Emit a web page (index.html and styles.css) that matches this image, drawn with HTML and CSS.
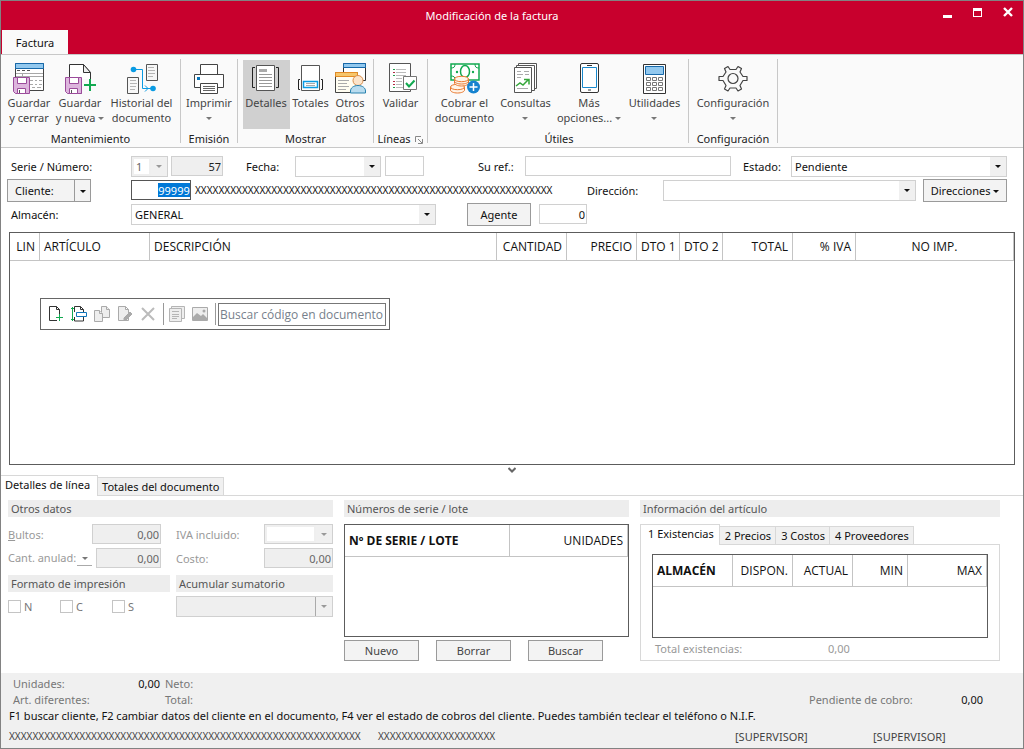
FILE: index.html
```html
<!DOCTYPE html>
<html lang="es">
<head>
<meta charset="utf-8">
<title>Modificación de la factura</title>
<link rel="stylesheet" href="styles.css">
</head>
<body>
<div class="window">
<header class="titlebar">
  <nav class="main-tabs"><button class="main-tab" type="button">Factura</button></nav>
  <h1 class="title">Modificación de la factura</h1>
  <div class="controls">
    <button type="button" aria-label="Minimizar"><svg width="10" height="12"><path d="M0 10h9v3H0z" fill="#fff"/></svg></button>
    <button type="button" aria-label="Maximizar"><svg width="10" height="12"><path d="M0 3h9v9H0zM1 6v5h7V6z" fill="#fff" fill-rule="evenodd"/></svg></button>
    <button type="button" aria-label="Cerrar"><svg width="10" height="12"><path d="M1 3l8 8M9 3l-8 8" stroke="#fff" stroke-width="2.4"/></svg></button>
  </div>
</header>

<div class="ribbon">
  <section class="group g-mant">
    <div class="tools">
      <button class="tool w51" type="button">
        <svg width="32" height="32" viewBox="0 0 32 32" fill="none"><path d="M2.5 1.5h28v27h-28z" fill="#fff" stroke="#444"/><path d="M2.500 1.500h28v5h-28z" fill="#92c8ee" stroke="#1769aa"/><path d="M4 8.500h3M9 8.500h3M14 8.500h3" stroke="#555"/><path d="M3 11.500h27M3 14.500h27M9.500 11v4M17 18.500h3M22 18.500h2M26 18.500h3M17 22.500h3M22 22.500h2M26 22.500h3M19 25.500h3M24 25.500h4" stroke="#a8a8a8"/><path d="M.5 15.500h16v16h-14l-2-2z" fill="#ddb5dd" stroke="#9b4b9b"/><path d="M4.500 15.500h9v6h-9zM4.500 26.500h8v5h-8z" fill="#fff" stroke="#9b4b9b"/><path d="M6.500 28v3" stroke="#555"/></svg>
        <span>Guardar<br>y cerrar</span></button>
      <button class="tool w51" type="button">
        <svg width="32" height="32" viewBox="0 0 32 32" fill="none"><path d="M5.500 31V2.500h14l7 8V31z" fill="#fff" stroke="#333"/><path d="M19.500 2.500v8h7z" fill="#eee" stroke="#333"/><path d="M18 17h13v15H18z" fill="#fafafa"/><path d="M1.500 15.500h16v16h-14l-2-2z" fill="#ddb5dd" stroke="#9b4b9b"/><path d="M5.500 15.500h9v6h-9zM5.500 26.500h8v5h-8z" fill="#fff" stroke="#9b4b9b"/><path d="M7.500 28v3" stroke="#555"/><path d="M26 17v12M20 23h12" stroke="#12a950" stroke-width="2"/></svg>
        <span>Guardar<br>y nueva <i class="caret"></i></span></button>
      <button class="tool w72" type="button">
        <svg width="32" height="32" viewBox="0 0 32 32" fill="none"><path d="M20.500 2.500h11v16h-11zM1.500 15.500h11v16h-11z" fill="#f7f7f7" stroke="#555"/><path d="M22 5.500h6M22 8.500h7M22 11.500h7M22 14.500h5M4 18.500h6M4 21.500h7M4 24.500h6M4 27.500h5" stroke="#b5b5b5"/><path d="M8 7.500h8.500v19H26" stroke="#0a9be3"/><path d="M19 23.500l3 3-3 3" stroke="#0a9be3"/><circle cx="7.500" cy="7.500" r="2.800" fill="#0a9be3"/><circle cx="27" cy="26.500" r="2.800" fill="#0a9be3"/></svg>
        <span>Historial del<br>documento</span></button>
    </div>
    <h2>Mantenimiento</h2>
  </section>
  <section class="group g-emi">
    <div class="tools">
      <button class="tool w51" type="button">
        <svg width="32" height="32" viewBox="0 0 32 32" fill="none"><path d="M7.500 2.500h17v10h-17z" fill="#fff" stroke="#444"/><path d="M1.500 12.500h29v13h-29z" fill="#fff" stroke="#444"/><path d="M4 15h3v3H4z" fill="#0876bb"/><path d="M7.500 21.500h17v10h-17z" fill="#fff" stroke="#444"/><path d="M10 24.500h12M10 26.500h12M10 28.500h12" stroke="#666"/></svg>
        <span>Imprimir<br><i class="caret"></i></span></button>
    </div>
    <h2>Emisión</h2>
  </section>
  <section class="group g-mos">
    <div class="tools">
      <button class="tool w47 active" type="button">
        <svg width="32" height="32" viewBox="0 0 32 32" fill="none"><path d="M6.500 3.500h18v25h-18z" fill="#fff" stroke="#555"/><path d="M9 7h8v3H9z" fill="#aaa"/><path d="M9 12.500h13M9 15.500h13M9 18.500h13M9 21.500h13M9 24.500h13" stroke="#999"/><path d="M5 5.500H2.500v20H5M26 5.500h2.500v20H26" stroke="#222"/></svg>
        <span>Detalles</span></button>
      <button class="tool w42" type="button">
        <svg width="32" height="32" viewBox="0 0 32 32" fill="none"><path d="M6.500 3.500h18v25h-18z" fill="#fff" stroke="#555"/><path d="M8.500 19.500h14v6h-14z" fill="#fff" stroke="#0a9be3" stroke-width="1.500"/><path d="M11 21.500h9M11 23.500h9" stroke="#aaa"/><path d="M5 17.500H3.500v10H5M26 17.500h1.500v10H26" stroke="#222"/></svg>
        <span>Totales</span></button>
      <button class="tool w37" type="button">
        <svg width="32" height="32" viewBox="0 0 32 32" fill="none"><path d="M9.500 1.500h22v17h-22z" fill="#fff" stroke="#333"/><path d="M9.500 1.500h22v4h-22z" fill="#92c8ee" stroke="#1769aa"/><path d="M1.500 10.500h22v20h-22z" fill="#fffdf1" stroke="#444"/><path d="M1.500 10.500h22v4h-22z" fill="#f6c66b" stroke="#e48b24"/><path d="M4 18.500h11M4 21.500h9M4 24.500h11M4 27.500h8" stroke="#aaa"/><circle cx="24" cy="18.500" r="5" fill="#fce4ca" stroke="#d98e4c"/><path d="M16.500 31v-2c0-3 3-5.500 7.500-5.500s7.500 2.500 7.500 5.500v2z" fill="#b9dcef" stroke="#2982ae"/></svg>
        <span>Otros<br>datos</span></button>
    </div>
    <h2>Mostrar</h2>
  </section>
  <section class="group g-lin">
    <div class="tools">
      <button class="tool w51" type="button">
        <svg width="32" height="32" viewBox="0 0 32 32" fill="none"><path d="M4.500 1.500h21v28h-21z" fill="#fff" stroke="#555"/><path d="M11 7.500h10M11 10.500h10M11 13.500h10M11 16.500h6M11 19.500h6M11 22.500h6M11 25.500h8" stroke="#bbb"/><path d="M8 7.500h2M8 13.500h2M8 25.500h2" stroke="#20a050"/><path d="M8 10.500h2M8 19.500h2M8 22.500h2" stroke="#b42a44"/><path d="M18.500 14.500h13v13h-13z" fill="#fff" stroke="#777"/><path d="M21 21l3 3.500 5.500-6" stroke="#12a950" stroke-width="2"/></svg>
        <span>Validar</span></button>
    </div>
    <h2>Líneas <svg class="launcher" width="8" height="8" fill="none"><path d="M.5 6V.5H6" stroke="#888"/><path d="M3 3l4 4M7.500 3v4.500H3" stroke="#888"/></svg></h2>
  </section>
  <section class="group g-uti">
    <div class="tools">
      <button class="tool w61" type="button">
        <svg width="32" height="32" viewBox="0 0 32 32" fill="none"><path d="M2 2h28v16H2z" fill="#fff" stroke="#12a950" stroke-width="1.500"/><path d="M2 6c3 0 4-1 4-4M26 2c0 3 1 4 4 4M2 14c3 0 4 1 4 4" stroke="#12a950"/><ellipse cx="16" cy="9.500" rx="4.500" ry="6" stroke="#12a950" stroke-width="1.500"/><circle cx="8" cy="10" r="1.200" fill="#12a950"/><circle cx="24" cy="10" r="1.200" fill="#12a950"/><g fill="#fff4e8" stroke="#e9782f"><path d="M1.500 25v3c0 1.700 3 3 7 3s7-1.300 7-3v-3"/><ellipse cx="8.500" cy="25" rx="7" ry="2.700"/><path d="M5.500 17v4c0 1.500 3 3 7 3s7-1.500 7-3v-4"/><ellipse cx="12.500" cy="17" rx="7" ry="2.700"/><path d="M5.500 19c0 1.700 3 3 7 3s7-1.300 7-3" fill="none"/></g><circle cx="24.500" cy="25" r="6.500" fill="#1583cf"/><path d="M24.500 21v8M20.500 25h8" stroke="#fff" stroke-width="1.500"/></svg>
        <span>Cobrar el<br>documento</span></button>
      <button class="tool w61" type="button">
        <svg width="32" height="32" viewBox="0 0 32 32" fill="none"><g fill="#fff" stroke="#555"><path d="M8.500 1.500h18v25h-18z"/><path d="M6.500 3.500h18v25h-18z"/><path d="M4.500 5.500h17v25h-17z"/></g><path d="M7 9.500h4M14 9.500h5M7 12.500h6M15 12.500h4M7 15.500h4M7 26.500h11" stroke="#aaa"/><path d="M6 24l4-3 3 2 5-5M14 17.500h5v5" stroke="#35a63a" stroke-width="1.500"/></svg>
        <span>Consultas<br><i class="caret"></i></span></button>
      <button class="tool w66" type="button">
        <svg width="32" height="32" viewBox="0 0 32 32" fill="none"><rect x="7.500" y="1.500" width="18" height="29" rx="1.500" fill="#fff" stroke="#333"/><path d="M9.500 5.500h14v20h-14z" stroke="#1988cc"/><path d="M14 3.500h5M15 28h3" stroke="#333"/></svg>
        <span>Más<br>opciones... <i class="caret"></i></span></button>
      <button class="tool w65" type="button">
        <svg width="32" height="32" viewBox="0 0 32 32" fill="none"><path d="M4.500 2.500h22v29h-22z" fill="#fff" stroke="#333"/><path d="M6.500 4.500h18v8h-18z" fill="#92c8ee" stroke="#1769aa"/><path d="M7.500 15.500h4v3h-4zM13.500 15.500h4v3h-4zM19.500 15.500h4v3h-4zM7.500 20.500h4v3h-4zM13.500 20.500h4v3h-4zM19.500 20.500h4v3h-4zM7.500 25.500h4v3h-4zM13.500 25.500h4v3h-4zM19.500 25.500h4v3h-4z" stroke="#777"/></svg>
        <span>Utilidades<br><i class="caret"></i></span></button>
    </div>
    <h2>Útiles</h2>
  </section>
  <section class="group g-conf">
    <div class="tools">
      <button class="tool w72" type="button">
        <svg width="32" height="32" viewBox="0 0 32 32" fill="none" stroke="#444" stroke-linejoin="round"><path d="M13 7.500l-2-3-3.500 2 1.500 3.500-3 4.500H2v4h4l3 5-1.500 3.500 3.500 2 2-3h6l2 3 3.500-2-1.500-3.500 3-5h4v-4h-4L23 10l1.500-3.500-3.500-2-2 3z" stroke-width="1.200"/><circle cx="16" cy="16.500" r="5" stroke-width="1.200"/></svg>
        <span>Configuración<br><i class="caret"></i></span></button>
    </div>
    <h2>Configuración</h2>
  </section>
</div>

<main class="content">
<form class="form">
  <div class="row">
    <label class="lead" for="serie">Serie / Número:</label>
    <span class="combo off w-serie"><select id="serie" disabled><option>1</option></select></span>
    <input class="box off num w-num" value="57" aria-label="Número" readonly>
    <label class="l-fecha" for="fecha">Fecha:</label>
    <span class="combo w-fecha"><select id="fecha"><option></option></select></span>
    <input class="box w-hora" aria-label="Hora">
    <label class="l-ref" for="ref">Su ref.:</label>
    <input class="box grow" id="ref">
    <label class="l-estado" for="estado">Estado:</label>
    <span class="combo w-estado"><select id="estado"><option>Pendiente</option></select></span>
  </div>
  <div class="row">
    <div class="lead-split"><button type="button" class="btn split-main">Cliente:</button><button type="button" class="btn split-arrow" aria-label="Más acciones de cliente"><i class="caret dark"></i></button></div>
    <span class="code-box"><input value="99999" aria-label="Código de cliente"></span>
    <span class="client-name">XXXXXXXXXXXXXXXXXXXXXXXXXXXXXXXXXXXXXXXXXXXXXXXXXXXXXXXXXXXXX</span>
    <label class="l-dir" for="dir">Dirección:</label>
    <span class="combo grow"><select id="dir"><option></option></select></span>
    <button type="button" class="btn w-dirs">Direcciones <i class="caret dark"></i></button>
  </div>
  <div class="row">
    <label class="lead" for="alm">Almacén:</label>
    <span class="combo w-alm"><select id="alm"><option>GENERAL</option></select></span>
    <button type="button" class="btn w-agente">Agente</button>
    <input class="box num w-agnum" value="0" aria-label="Agente">
  </div>
</form>

<section class="lines">
  <table class="grid main-grid">
    <colgroup><col class="c30"><col class="c110"><col><col class="c70"><col class="c70"><col class="c43"><col class="c43"><col class="c70"><col class="c63"><col class="c158"></colgroup>
    <thead><tr><th class="r">LIN</th><th>ARTÍCULO</th><th>DESCRIPCIÓN</th><th class="r">CANTIDAD</th><th class="r">PRECIO</th><th class="r">DTO 1</th><th class="r">DTO 2</th><th class="r">TOTAL</th><th class="r">% IVA</th><th class="c">NO IMP.</th></tr></thead>
  </table>
  <div class="toolbar">
    <button type="button" aria-label="Nueva línea"><svg width="16" height="16" fill="none"><path d="M9 14.500H1.500V.5h7l3 3V8M8.500.5v3h3" stroke="#333"/><path d="M11.500 8v7M8 11.500h7" stroke="#12a950"/></svg></button>
    <button type="button" aria-label="Insertar línea"><svg width="16" height="16" fill="none"><path d="M3.500 6V.5h6l3 3V6M9.500.5v3h3M3.500 11v4h9v-4" stroke="#333"/><path d="M5.500 6.500h10v4h-10z" stroke="#1176bb"/><path d="M1.500 1v14M0 2.500h3M0 13.500h3" stroke="#12a950"/></svg></button>
    <button type="button" aria-label="Copiar" disabled><svg width="16" height="16" fill="#eee" stroke="#aaa"><path d="M7.500.5h5l3 3v8h-8z"/><path d="M.5 4.500h5l3 3v8h-8z"/><path d="M5.500 4.500v3h3M12.500.5v3h3"/></svg></button>
    <button type="button" aria-label="Modificar" disabled><svg width="16" height="16" fill="#eee" stroke="#aaa"><path d="M1.500.5h7l3 3v11h-10zM8.500.5v3h3"/><path d="M7 12l6-6 2 2-6 6H7z" fill="#aaa"/></svg></button>
    <button type="button" aria-label="Eliminar" disabled><svg width="16" height="16" fill="none"><path d="M2 2l12 12M14 2L2 14" stroke="#bbb" stroke-width="2"/></svg></button>
    <i class="bar"></i>
    <button type="button" aria-label="Detalle" disabled><svg width="16" height="16" fill="#eee" stroke="#b5b5b5"><path d="M2.500.5h13v12h-13z"/><path d="M.5 2.500h12v13H.5z"/><path d="M3 5.500h7M3 8.500h7M3 10.500h7M3 12.500h5"/></svg></button>
    <button type="button" aria-label="Imagen" disabled><svg width="16" height="16"><path d="M.5 1.500h15v13H.5z" fill="#eee" stroke="#aaa"/><path d="M1 11l4-4 4 3 2-2 4 4v2H1z" fill="#aaa"/><circle cx="12" cy="5" r="1.500" fill="#aaa"/></svg></button>
    <i class="bar"></i>
    <input class="search" placeholder="Buscar código en documento" aria-label="Buscar código en documento">
  </div>
</section>
<button type="button" class="expander" aria-label="Contraer panel"><svg width="8" height="6" fill="none"><path d="M.5 1l3.500 3.500L7.500 1" stroke="#666" stroke-width="2"/></svg></button>

<nav class="tabs"><button type="button" class="tab current">Detalles de línea</button><button type="button" class="tab">Totales del documento</button></nav>

<div class="panels">
  <section>
    <h3>Otros datos</h3>
    <div class="fields">
      <label for="bultos"><u>B</u>ultos:</label><input id="bultos" class="box off num" value="0,00" disabled>
      <label class="second" for="iva">IVA incluido:</label><span class="combo off"><select id="iva" disabled><option></option></select></span>
      <span class="anul"><label for="anul">Cant. anulad:</label><button type="button" aria-label="Tipo de cantidad" disabled><i class="caret"></i></button></span><input id="anul" class="box off num" value="0,00" disabled>
      <label class="second" for="costo">Costo:</label><input id="costo" class="box off num" value="0,00" disabled>
    </div>
    <div class="pair">
      <div><h3>Formato de impresión</h3>
        <div class="checks"><label><input type="checkbox" disabled>N</label><label><input type="checkbox" disabled>C</label><label><input type="checkbox" disabled>S</label></div></div>
      <div><h3>Acumular sumatorio</h3><span class="combo off sumatorio"><select aria-label="Acumular sumatorio" disabled><option></option></select></span></div>
    </div>
  </section>
  <section>
    <h3>Números de serie / lote</h3>
    <div class="grid-box serial"><table class="grid tall"><colgroup><col><col class="c118"></colgroup><thead><tr><th class="b">Nº DE SERIE / LOTE</th><th class="r">UNIDADES</th></tr></thead></table></div>
    <div class="actions"><button type="button" class="btn">Nuevo</button><button type="button" class="btn">Borrar</button><button type="button" class="btn">Buscar</button></div>
  </section>
  <section>
    <h3>Información del artículo</h3>
    <nav class="tabs inner"><button type="button" class="tab current">1 Existencias</button><button type="button" class="tab">2 Precios</button><button type="button" class="tab">3 Costos</button><button type="button" class="tab">4 Proveedores</button></nav>
    <div class="stock">
      <div class="grid-box"><table class="grid tall"><colgroup><col class="c80"><col class="c60"><col class="c60"><col class="c55"><col></colgroup><thead><tr><th class="b">ALMACÉN</th><th class="r">DISPON.</th><th class="r">ACTUAL</th><th class="r">MIN</th><th class="r">MAX</th></tr></thead></table></div>
      <p><span>Total existencias:</span><span>0,00</span></p>
    </div>
  </section>
</div>
</main>

<footer class="footer">
  <div class="summary">
    <span>Unidades:</span><b>0,00</b><span>Neto:</span><span></span><b></b>
    <span>Art. diferentes:</span><b></b><span>Total:</span><span>Pendiente de cobro:</span><b>0,00</b>
  </div>
  <p class="hint">F1 buscar cliente, F2 cambiar datos del cliente en el documento, F4 ver el estado de cobros del cliente. Puedes también teclear el teléfono o N.I.F.</p>
  <div class="status"><span class="xs">XXXXXXXXXXXXXXXXXXXXXXXXXXXXXXXXXXXXXXXXXXXXXXXXXXXXXXXXXXXX</span><span class="xs">XXXXXXXXXXXXXXXXXXXX</span><span>[SUPERVISOR]</span><span>[SUPERVISOR]</span></div>
</footer>
</div>
</body>
</html>
```
FILE: styles.css
```css
* { box-sizing: border-box; }
body { margin: 0; font: 11px/15px "Noto Sans", "Open Sans", sans-serif; color: #111; background: #fff; }
button, input, select { font: inherit; color: inherit; margin: 0; padding: 0; border: 0; border-radius: 0; background: none; min-width: 0; }
h1, h2, h3, p { margin: 0; font-size: 11px; font-weight: 400; }
label, button, h3, th, .footer { white-space: nowrap; }

.window { min-height: 100vh; display: flex; flex-direction: column; border: 1px solid #828282; }

/* Title bar */
.titlebar { height: 53px; display: grid; grid-template-columns: 200px 1fr 240px; background: #c8002d; color: #fff; }
.main-tabs { display: flex; align-items: flex-end; padding-left: 1px; }
.main-tab { width: 66px; height: 24px; background: #fafafa; color: #111; }
.title { text-align: center; padding: 7px 0 0; }
.controls { display: flex; justify-content: flex-end; align-items: flex-start; gap: 20px; padding: 4px 10px 0 0; }
.controls button, .controls svg { display: block; width: 10px; height: 13px; }

/* Ribbon */
.ribbon { display: flex; height: 94px; background: #fafafa; border-top: 1px solid #c8c8c8; border-bottom: 1px solid #c8c8c8; }
.group { display: flex; flex-direction: column; margin: 4px 0; border-right: 1px solid #c8c8c8; }
.tools { display: flex; justify-content: center; height: 72px; padding-top: 1px; }
.tool { height: 69px; padding-top: 2px; display: flex; flex-direction: column; align-items: center; justify-content: flex-start; color: #444; }
.tool svg { display: block; flex: none; margin-bottom: 1px; }
.tool.active { background: #d0d0d0; }
.group h2 { text-align: center; line-height: 16px; padding-top: 2px; color: #222; white-space: nowrap; }
.launcher { margin-left: 2px; vertical-align: -1px; }
.g-mant { width: 180px; } .g-emi { width: 57px; } .g-mos { width: 136px; }
.g-lin { width: 54px; } .g-uti { width: 261px; } .g-conf { width: 89px; }
.g-uti { padding-left: 5px; }
.g-uti h2 { padding-right: 3px; }
.w37 { width: 37px; } .w42 { width: 42px; } .w47 { width: 47px; } .w51 { width: 51px; }
.w61 { width: 61px; } .w65 { width: 65px; } .w66 { width: 66px; } .w72 { width: 72px; }
.caret { display: inline-block; vertical-align: 2px; border: solid transparent; border-width: 3px 3px 0; border-top-color: #777; }
.caret.dark { border-top-color: #111; }

/* Header form */
.content { flex: 1; display: flex; flex-direction: column; }
.form { padding: 6px 16px 6px 6px; }
.row { display: flex; height: 24px; align-items: center; }
.lead { flex: 0 0 124px; padding-left: 4px; }
.lead-split { flex: 0 0 124px; display: flex; }
.box { height: 20px; border: 1px solid #d0d0d0; background: #fff; padding: 0 4px; width: 100%; flex: none; }
.num { text-align: right; padding-right: 1px; }
.off { background: #efefef; color: #666; }
.combo { position: relative; display: flex; height: 21px; flex: none; border: 1px solid #d0d0d0; }
.combo select { appearance: none; width: 100%; padding: 0 20px 0 3px; opacity: 1; }
.combo::before { content: ""; position: absolute; right: 0; top: 0; bottom: 0; width: 16px; background: #f0f0f0; pointer-events: none; }
.combo::after { content: ""; position: absolute; right: 5px; top: 8px; border: solid transparent; border-width: 3px 3px 0; border-top-color: #111; pointer-events: none; }
.combo.off::after { border-top-color: #999; }
.combo.off select { background: #fff; margin: 2px 18px 2px 2px; padding: 0 2px; }
.row .grow { flex: 1; width: auto; }
.w-serie { width: 37px; margin-right: 3px; }
.row .w-num { width: 52px; color: #222; }
.l-fecha { width: 72px; padding-left: 23px; }
.w-fecha { width: 86px; margin-right: 4px; }
.row .w-hora { width: 39px; }
.l-ref { width: 101px; padding-left: 54px; }
.l-estado { width: 60px; padding-left: 12px; }
.w-estado { width: 216px; }
.btn { height: 23px; background: #f3f3f3; border: 1px solid #9a9a9a; }
.split-main { width: 68px; text-align: left; padding-left: 7px; }
.split-arrow { width: 17px; margin-left: -1px; }
.code-box { display: flex; align-items: center; justify-content: flex-end; flex: none; width: 60px; height: 20px; border: 1px solid #555; }
.code-box input { width: 32px; height: 14px; background: #0078d7; color: #fff; text-align: center; }
.client-name { flex: none; width: 396px; padding-left: 4px; font-size: 10px; }
.l-dir { width: 76px; }
.w-dirs { width: 84px; margin-left: 7px; }
.w-alm { width: 305px; }
.w-agente { width: 64px; margin: 0 8px 0 31px; }
.row .w-agnum { width: 48px; }

/* Tables */
.lines, .grid-box { border: 1px solid #5c5c5c; }
.lines { flex: 1; margin: 0 8px; min-height: 120px; }
.grid { width: 100%; table-layout: fixed; border-collapse: separate; border-spacing: 0; font-family: "Open Sans", "Noto Sans", sans-serif; font-size: 12px; }
.grid th { height: 28px; padding: 0 4px; text-align: left; font-weight: 400; border-right: 1px solid #c4c4c4; border-bottom: 1px solid #c4c4c4; overflow: hidden; }
.grid.tall th { height: 32px; }
.grid th.r { text-align: right; } .grid th.c { text-align: center; } .grid th.b { font-weight: 700; }
.c30 { width: 30px; } .c43 { width: 43px; } .c55 { width: 55px; } .c60 { width: 60px; } .c63 { width: 63px; }
.c70 { width: 70px; } .c80 { width: 80px; } .c110 { width: 110px; } .c118 { width: 118px; } .c158 { width: 158px; }
.toolbar { display: flex; align-items: center; width: 350px; height: 32px; margin: 37px 0 0 30px; padding: 0 3px 0 7px; border: 1px solid #666; }
.toolbar button { width: 16px; height: 16px; margin-right: 7px; }
.toolbar svg { display: block; }
.bar { width: 1px; height: 22px; background: #999; margin-right: 5px; }
.bar + .search { margin-left: -3px; }
.search { flex: 1; height: 23px; padding: 0 1px; border: 1px solid #777; font-family: "Open Sans", "Noto Sans", sans-serif; font-size: 12px; }
.search::placeholder { color: #777f8c; opacity: 1; }
.expander { align-self: center; height: 10px; display: flex; align-items: center; }

/* Tabs */
.tabs { display: flex; align-items: flex-end; height: 21px; box-shadow: inset 0 -1px #d8d8d8; }
.tab { height: 19px; padding: 0 4px; background: #f0f0f0; border: 1px solid #d8d8d8; border-left: 0; }
.tab.current { height: 21px; padding: 0 7px 3px 4px; background: #fff; border-bottom: 0; }

/* Detail panels */
.panels { display: grid; grid-template-columns: 325px 285px minmax(0, 1fr); gap: 11px; padding: 4px 23px 12px 7px; }
h3 { height: 17px; line-height: 17px; padding-left: 3px; background: #ededed; color: #555; }
.fields { display: grid; grid-template-columns: 84px 69px 103px 69px; row-gap: 4px; padding: 7px 0; align-items: center; color: #999; }
.fields .combo, .fields .box { height: 20px; }
.second { padding-left: 15px; }
.anul { display: flex; }
.anul label { width: 70px; overflow: hidden; }
.anul button { width: 15px; border-bottom: 1px solid #aaa; }
.anul + .box { width: 65px; margin-left: 4px; }
.pair { display: grid; grid-template-columns: 162px 157px; column-gap: 6px; }
.sumatorio { margin-top: 4px; }
.combo.sumatorio select { background: #efefef; }
.sumatorio::before { border-left: 1px solid #aaa; }
.checks { display: flex; padding-top: 7px; color: #777; }
.checks label { width: 52px; display: flex; align-items: center; gap: 3px; }
.checks input { appearance: none; width: 13px; height: 13px; border: 1px solid #c4c4c4; }
.serial { height: 113px; margin-top: 7px; }
.actions { display: flex; gap: 17px; margin-top: 3px; color: #444; }
.actions .btn { width: 75px; height: 21px; }
.inner { margin-top: 7px; border-left: 1px solid #d8d8d8; }
.inner .tab { padding: 0 4px 0 5px; }
.inner .tab.current { padding: 0 5px 3px 7px; }
.stock { padding: 9px 11px 3px; border: 1px solid #d8d8d8; border-top: 0; color: #999; }
.stock .grid-box { height: 84px; color: #111; }
.stock p { display: flex; padding: 3px 3px 1px; }
.stock p span:first-child { width: 173px; }

/* Footer */
.footer { background: #f0f0f0; padding: 3px 8px; }
.summary { display: grid; grid-template-columns: 96px 51px minmax(60px, 1fr) 120px 54px; line-height: 16px; padding: 0 32px 0 4px; color: #777; }
.summary b { font-weight: 400; color: #111; text-align: right; }
.summary span:nth-child(5n + 3) { padding-left: 5px; }
.hint { line-height: 16px; }
.status { display: grid; grid-template-columns: 369px 1fr 138px 142px; padding: 5px 0 1px; color: #444; }
.xs { font-size: 10px; }
```
